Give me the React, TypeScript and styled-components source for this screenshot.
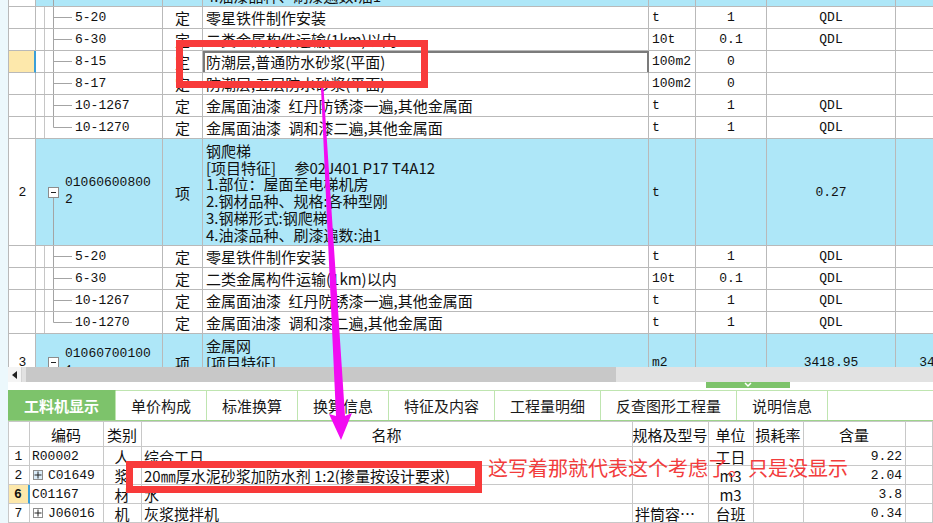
import React from 'react';
import styled, { createGlobalStyle } from 'styled-components';

const CJK = `"Noto Sans CJK SC", "Noto Sans", sans-serif`;
const MONO = `"Liberation Mono", "Noto Sans CJK SC", monospace`;

const LINE = '#b9b9b9';
const LINE2 = '#c8c8c8';
const BLUE = '#aee7f8';
const GREEN = '#7dc36b';
const GREEN_LIGHT = '#bfe5b0';
const RED = '#f83a3a';

type Align = 'left' | 'center' | 'right';
const justify = (a?: Align) => (a === 'center' ? 'center' : a === 'right' ? 'flex-end' : 'flex-start');

const GlobalStyle = createGlobalStyle`
  html, body { margin: 0; padding: 0; background: #fff; }
  * { box-sizing: border-box; }
`;

const Page = styled.div`
  position: relative;
  width: 933px;
  height: 523px;
  overflow: hidden;
  display: flex;
  font-family: ${CJK};
  font-size: 15px;
  color: #111;
`;

const Strip = styled.div`
  width: 8px;
  flex: none;
  background: #ecf8fc;
`;

const Main = styled.div`
  flex: 1;
  min-width: 0;
  display: flex;
  flex-direction: column;
`;

/* --- top grid (清单) --- */

const TopGrid = styled.div`
  height: 367px;
  flex: none;
  overflow: hidden;
  border-left: 1px solid ${LINE};
`;

// scrolled so that only the tail of item 1 shows
const Scroller = styled.div`
  margin-top: -100px;
  width: 989px;
`;

const Row = styled.div<{ $h: number; $blue?: boolean }>`
  display: grid;
  grid-template-columns: 27px 127px 40px 446px 47px 71px 129px 102px;
  height: ${p => p.$h}px;
  background: ${p => (p.$blue ? BLUE : '#fff')};
`;

const Cell = styled.div<{ $align?: Align; $mono?: boolean }>`
  border-right: 1px solid ${LINE};
  border-bottom: 1px solid ${LINE};
  display: flex;
  align-items: center;
  justify-content: ${p => justify(p.$align)};
  padding: 0 3px;
  overflow: hidden;
  white-space: nowrap;
  font-family: ${p => (p.$mono ? MONO : CJK)};
  font-size: ${p => (p.$mono ? '13px' : '15px')};
`;

const NumCell = styled(Cell)<{ $current?: boolean }>`
  justify-content: center;
  background: ${p => (p.$current ? '#fde8ab' : '#fff')};
  border-right: ${p => (p.$current ? '2px solid #3b9fd8' : `1px solid ${LINE}`)};
`;

const TreeCell = styled(Cell)`
  padding: 0;
`;

const NameCell = styled(Cell)<{ $focus?: boolean }>`
  box-shadow: ${p => (p.$focus ? 'inset 2px 2px 0 #7b7b7b, inset -1px 0 0 #7b7b7b' : 'none')};
  border-right-color: ${p => (p.$focus ? '#7b7b7b' : LINE)};
`;

const MultiName = styled(Cell)`
  align-items: flex-start;
  white-space: pre;
  line-height: 16.7px;
  padding-top: 4px;
`;

const BranchSvg = styled.svg`
  flex: none;
  display: block;
`;

const CodeText = styled.span`
  margin-left: 1px;
  font-family: ${MONO};
  font-size: 13px;
`;

const Expander = styled.div`
  align-self: stretch;
  width: 11px;
  margin-left: 12px;
  flex: none;
  display: flex;
  flex-direction: column;
  align-items: center;
`;

const Spacer = styled.div`
  flex: 1;
`;

const Stem = styled.div`
  flex: 1;
  width: 1px;
  background: #a4a4a4;
`;

const WrapCode = styled.div`
  width: 90px;
  margin-left: 6px;
  white-space: normal;
  word-break: break-all;
  line-height: 16.7px;
  font-family: ${MONO};
  font-size: 13px;
`;

/* --- horizontal scrollbar + splitter --- */

const HScroll = styled.div`
  height: 15px;
  flex: none;
  display: flex;
  background: #e2e2e2;
`;

const ArrowBtn = styled.div`
  width: 14px;
  display: flex;
  align-items: center;
  justify-content: center;
  background: #f5f5f5;
  border-right: 1px solid #d4d4d4;
`;

const Thumb = styled.div`
  width: 590px;
  margin-left: 4px;
  background: #c8c8c8;
`;

const Splitter = styled.div`
  height: 8px;
  flex: none;
  display: flex;
  align-items: flex-start;
`;

const Handle = styled.div`
  width: 84px;
  height: 6px;
  margin-left: 698px;
  background: ${GREEN};
  display: flex;
  justify-content: center;
  align-items: flex-start;
`;

/* --- tabs --- */

const TabBar = styled.div`
  height: 31px;
  flex: none;
  display: flex;
  border-bottom: 1px solid #9ed48c;
`;

const Tab = styled.div<{ $active?: boolean }>`
  display: flex;
  align-items: center;
  padding: 0 ${p => (p.$active ? 16 : 15)}px;
  border-top: 1px solid ${p => (p.$active ? GREEN : GREEN_LIGHT)};
  border-right: 1px solid ${GREEN_LIGHT};
  background: ${p => (p.$active ? GREEN : '#fff')};
  color: ${p => (p.$active ? '#fff' : '#1a1a1a')};
  font-weight: ${p => (p.$active ? 700 : 400)};
  white-space: nowrap;
`;

const TabFill = styled.div`
  flex: 1;
  border-top: 1px solid ${GREEN_LIGHT};
`;

/* --- bottom grid (工料机) --- */

const BGrid = styled.div`
  flex: 1;
  border-top: 1px solid ${LINE2};
  border-left: 1px solid ${LINE2};
`;

const BRow = styled.div<{ $h: number }>`
  display: grid;
  grid-template-columns: 21px 74px 38px 491px 76px 45px 50px 102px 1fr;
  height: ${p => p.$h}px;
`;

const BCell = styled.div<{ $align?: Align; $mono?: boolean; $current?: boolean }>`
  border-right: ${p => (p.$current ? '2px solid #3b9fd8' : `1px solid ${LINE2}`)};
  border-bottom: 1px solid ${LINE2};
  background: ${p => (p.$current ? '#fde8ab' : '#fff')};
  font-weight: ${p => (p.$current ? 700 : 400)};
  display: flex;
  align-items: center;
  justify-content: ${p => justify(p.$align)};
  padding: 0 3px 0 2px;
  overflow: hidden;
  white-space: nowrap;
  font-family: ${p => (p.$mono ? MONO : CJK)};
  font-size: ${p => (p.$mono ? '13px' : '15px')};
`;

const PlusBox = styled.span<{ $hl?: boolean }>`
  width: 10px;
  height: 10px;
  margin: 0 5px 0 1px;
  flex: none;
  border: 1px solid #8c8c8c;
  background: ${p => (p.$hl ? '#d9ebf8' : '#fff')};
  display: flex;
  align-items: center;
  justify-content: center;
`;

/* --- annotations over the screenshot --- */

const Overlay = styled.svg`
  position: absolute;
  left: 0;
  top: 0;
  pointer-events: none;
`;

const Note = styled.div`
  position: absolute;
  left: 488px;
  top: 457px;
  font-size: 20px;
  line-height: 22px;
  color: #f23c3c;
  white-space: nowrap;
`;

interface Item {
  code: string;
  type: string;
  name: string;
  unit: string;
  expr: string;
  qty: string;
  current?: boolean;
  last?: boolean;
}

const group1: Item[] = [
  { code: '5-20', type: '定', name: '零星铁件制作安装', unit: 't', expr: '1', qty: 'QDL' },
  { code: '6-30', type: '定', name: '二类金属构件运输(1km)以内', unit: '10t', expr: '0.1', qty: 'QDL' },
  { code: '8-15', type: '定', name: '防潮层,普通防水砂浆(平面)', unit: '100m2', expr: '0', qty: '', current: true },
  { code: '8-17', type: '定', name: '防潮层,五层防水砂浆(平面)', unit: '100m2', expr: '0', qty: '' },
  { code: '10-1267', type: '定', name: '金属面油漆\u2002红丹防锈漆一遍,其他金属面', unit: 't', expr: '1', qty: 'QDL' },
  { code: '10-1270', type: '定', name: '金属面油漆\u2002调和漆二遍,其他金属面', unit: 't', expr: '1', qty: 'QDL', last: true },
];

const group2: Item[] = [
  { code: '5-20', type: '定', name: '零星铁件制作安装', unit: 't', expr: '1', qty: 'QDL' },
  { code: '6-30', type: '定', name: '二类金属构件运输(1km)以内', unit: '10t', expr: '0.1', qty: 'QDL' },
  { code: '10-1267', type: '定', name: '金属面油漆\u2002红丹防锈漆一遍,其他金属面', unit: 't', expr: '1', qty: 'QDL' },
  { code: '10-1270', type: '定', name: '金属面油漆\u2002调和漆二遍,其他金属面', unit: 't', expr: '1', qty: 'QDL', last: true },
];

const ladder = [
  '钢爬梯',
  '[项目特征]\u3000 参02J401 P17 T4A12',
  '1.部位：屋面至电梯机房',
  '2.钢材品种、规格:各种型刚',
  '3.钢梯形式:钢爬梯',
  '4.油漆品种、刷漆遍数:油1',
];

const Branch = ({ last }: { last?: boolean }) => (
  <BranchSvg width="38" height="21">
    <line x1="8.5" y1="0" x2="8.5" y2="21" stroke="#c6c6c6" />
    <line x1="17.5" y1="0" x2="17.5" y2={last ? 10.5 : 21} stroke="#a4a4a4" />
    <line x1="17.5" y1="10.5" x2="36" y2="10.5" stroke="#a4a4a4" />
  </BranchSvg>
);

const MinusIcon = () => (
  <svg width="11" height="11">
    <rect x="0.5" y="0.5" width="10" height="10" fill="#fff" stroke="#8c8c8c" />
    <line x1="3" y1="5.5" x2="8" y2="5.5" stroke="#222" />
  </svg>
);

const PlusIcon = () => (
  <svg width="8" height="8">
    <line x1="0.5" y1="4" x2="7.5" y2="4" stroke="#222" />
    <line x1="4" y1="0.5" x2="4" y2="7.5" stroke="#222" />
  </svg>
);

const ChildRow = ({ item }: { item: Item }) => (
  <Row $h={22}>
    <NumCell $current={item.current} />
    <TreeCell>
      <Branch last={item.last} />
      <CodeText>{item.code}</CodeText>
    </TreeCell>
    <Cell $align="center">{item.type}</Cell>
    <NameCell $focus={item.current}>{item.name}</NameCell>
    <Cell $mono>{item.unit}</Cell>
    <Cell $mono $align="center">{item.expr}</Cell>
    <Cell $mono $align="center">{item.qty}</Cell>
    <Cell />
  </Row>
);

interface ParentProps {
  num: string;
  code: string;
  lines: string[];
  unit: string;
  qty: string;
  extra?: string;
  h: number;
}

const ParentRow = ({ num, code, lines, unit, qty, extra, h }: ParentProps) => (
  <Row $h={h} $blue>
    <NumCell>
      <CodeText>{num}</CodeText>
    </NumCell>
    <TreeCell>
      <Expander>
        <Spacer />
        <MinusIcon />
        <Stem />
      </Expander>
      <WrapCode>{code}</WrapCode>
    </TreeCell>
    <Cell $align="center">项</Cell>
    <MultiName>{lines.join('\n')}</MultiName>
    <Cell $mono>{unit}</Cell>
    <Cell />
    <Cell $mono $align="center">{qty}</Cell>
    <Cell $mono $align="center">{extra}</Cell>
  </Row>
);

const tabs = ['工料机显示', '单价构成', '标准换算', '换算信息', '特征及内容', '工程量明细', '反查图形工程量', '说明信息'];

interface Material {
  n: string;
  code: string;
  type: string;
  name: string;
  spec?: string;
  unit: string;
  qty: string;
  plus?: boolean;
  hl?: boolean;
  current?: boolean;
}

const materials: Material[] = [
  { n: '1', code: 'R00002', type: '人', name: '综合工日', unit: '工日', qty: '9.22' },
  { n: '2', code: 'C01649', type: '浆', name: '20㎜厚水泥砂浆加防水剂 1:2(掺量按设计要求)', unit: 'm3', qty: '2.04', plus: true, hl: true },
  { n: '6', code: 'C01167', type: '材', name: '水', unit: 'm3', qty: '3.8', current: true },
  { n: '7', code: 'J06016', type: '机', name: '灰浆搅拌机', spec: '拌筒容…', unit: '台班', qty: '0.34', plus: true },
];

export default function App() {
  return (
    <Page>
      <GlobalStyle />
      <Strip />
      <Main>
        <TopGrid>
          <Scroller>
            <ParentRow num="1" code="010606002001" lines={['钢梯', '[项目特征]', '1.部位：屋面', '2.钢材品种、规格:各种型钢', '3.钢梯形式:钢直梯', '4.油漆品种、刷漆遍数:油1']} unit="t" qty="0.5" h={107} />
            {group1.map((it, i) => (
              <ChildRow key={'a' + i} item={it} />
            ))}
            <ParentRow num="2" code="010606008002" lines={ladder} unit="t" qty="0.27" h={107} />
            {group2.map((it, i) => (
              <ChildRow key={'b' + i} item={it} />
            ))}
            <ParentRow num="3" code="010607001001" lines={['金属网', '[项目特征]', '1.材料品种、规格:钢丝网']} unit="m2" qty="3418.95" extra="3418.95" h={58} />
          </Scroller>
        </TopGrid>

        <HScroll>
          <ArrowBtn>
            <svg width="5" height="8">
              <polygon points="5,0 0,4 5,8" fill="#222" />
            </svg>
          </ArrowBtn>
          <Thumb />
        </HScroll>

        <Splitter>
          <Handle>
            <svg width="10" height="6">
              <polyline points="2,1 5,4 8,1" fill="none" stroke="#fff" strokeWidth="1.5" />
            </svg>
          </Handle>
        </Splitter>

        <TabBar>
          {tabs.map((t, i) => (
            <Tab key={t} $active={i === 0}>
              {t}
            </Tab>
          ))}
          <TabFill />
        </TabBar>

        <BGrid>
          <BRow $h={25}>
            <BCell />
            <BCell $align="center">编码</BCell>
            <BCell $align="center">类别</BCell>
            <BCell $align="center">名称</BCell>
            <BCell $align="center">规格及型号</BCell>
            <BCell $align="center">单位</BCell>
            <BCell $align="center">损耗率</BCell>
            <BCell $align="center">含量</BCell>
            <BCell />
          </BRow>
          {materials.map(m => (
            <BRow key={m.n} $h={19}>
              <BCell $align="center" $mono $current={m.current}>
                {m.n}
              </BCell>
              <BCell $mono>
                {m.plus && (
                  <PlusBox $hl={m.hl}>
                    <PlusIcon />
                  </PlusBox>
                )}
                {m.code}
              </BCell>
              <BCell $align="center">{m.type}</BCell>
              <BCell>{m.name}</BCell>
              <BCell>{m.spec}</BCell>
              <BCell $align="center">{m.unit}</BCell>
              <BCell />
              <BCell $align="right" $mono>
                {m.qty}
              </BCell>
              <BCell />
            </BRow>
          ))}
        </BGrid>
      </Main>

      <Overlay width="933" height="523">
        <rect x="179.5" y="43.5" width="245" height="41" fill="none" stroke={RED} strokeWidth="7" />
        <rect x="129.5" y="464.5" width="349" height="25" fill="none" stroke={RED} strokeWidth="7" />
        <polygon
          points="321,88 336,416 329,414 341,440 352,413 345,416 323.5,88"
          fill="#f20cf2"
        />
      </Overlay>
      <Note>这写着那就代表这个考虑了。只是没显示</Note>
    </Page>
  );
}
